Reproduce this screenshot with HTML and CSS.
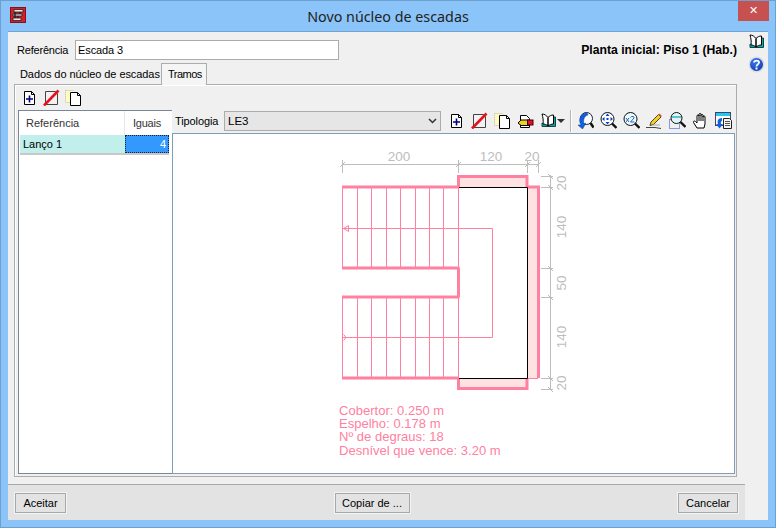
FILE: index.html
```html
<!DOCTYPE html>
<html lang="pt">
<head>
<meta charset="utf-8">
<title>Novo núcleo de escadas</title>
<link rel="stylesheet" href="styles.css">
</head>
<body>
<svg class="defs" width="0" height="0" aria-hidden="true">
  <defs>
    <radialGradient id="g-help" cx=".4" cy=".3" r=".8"><stop offset="0" stop-color="#3c78ee"/><stop offset="1" stop-color="#0f3aa8"/></radialGradient>
    <symbol id="i-new" viewBox="0 0 17 17"><path d="M3.500 2.500h7l3 3v10h-10z" fill="#fff" stroke="#000"/><path d="M10.500 2.500v3h3" fill="none" stroke="#000"/><path d="M8.500 6.500v7M5 10h7" stroke="#000080" stroke-width="1.600" fill="none"/></symbol>
    <symbol id="i-del" viewBox="0 0 17 17"><path d="M2.500 2.500h10l2 2v11h-12z" fill="#f2f2f2" stroke="#444"/><path d="M1 16.500 15.500 1.500" stroke="#e8101c" stroke-width="2.600" fill="none"/></symbol>
    <symbol id="i-copy" viewBox="0 0 17 17"><path d="M.5 1.500h8l2 2v10H.5z" fill="#fffbb8" stroke="#b8b8b8" stroke-dasharray="1 1"/><path d="M5.500 3.500h7l3 3v10h-10z" fill="#fff" stroke="#000"/><path d="M12.500 3.500v3h3" fill="none" stroke="#000"/></symbol>
    <symbol id="i-open" viewBox="0 0 17 17"><path d="M3.500 3.500h6l3 3v2h-9zM3.500 12v3.500h9V12" fill="#fff" stroke="#000"/><path d="M1 11l3-3h8v5.500H4z" fill="#f0d020" stroke="#000"/><rect x="10.500" y="8" width="5.500" height="5" fill="#e01030" stroke="#400"/></symbol>
    <symbol id="i-book" viewBox="0 0 17 17"><path d="M2 11v3.500h13.500V5H14" fill="#18a0a0" stroke="#0b4a4a"/><path d="M2 2c2.500 0 4.500 1.500 6 3.500V14c-1.500-1.500-3.500-2-5-2C3.500 9 3 5 2 2zM8 5.500C9.500 4 11 3 13.500 3v9c-2.500 0-4 1-5.500 2z" fill="#fff" stroke="#000"/></symbol>
    <symbol id="i-lens" viewBox="0 0 17 17"><circle cx="7.500" cy="7" r="6.500" fill="#fff" stroke="#111"/><path d="m12 11.500 4.500 4.500" stroke="#111" stroke-width="2.400"/></symbol>
    <symbol id="i-r" viewBox="0 0 17 17"><circle cx="9.500" cy="6.500" r="6" fill="#fff" stroke="#123"/><path d="m13.500 11 3 4.500" stroke="#111" stroke-width="2.400"/><path d="M4 13C1 8 3 1 10 1l1 2C7 4 6 8 7 12l2-1-3.500 6L1 13z" fill="#1060e0" stroke="#0a3a90" stroke-width=".5"/></symbol>
    <symbol id="i-fit" viewBox="0 0 17 17"><use href="#i-lens"/><path d="M7.500 1.500 5.500 4h4zM7.500 12.500 5.500 10h4zM2 7l2.500-2v4zM13 7l-2.500-2v4z" fill="#0040d0"/><rect x="6.500" y="6" width="2" height="2" fill="#0040d0"/></symbol>
    <symbol id="i-x2" viewBox="0 0 17 17"><circle cx="7.500" cy="7" r="6.500" fill="#e8fbff" stroke="#111"/><path d="m12 11.500 4.500 4.500" stroke="#111" stroke-width="2.400"/><path d="M3 6l3 4M6 6l-3 4" stroke="#3060c0"/><path d="M7.500 5.500q1-1.500 2.500-1t1 1.500L7.500 10h4" fill="none" stroke="#3060c0"/></symbol>
    <symbol id="i-pen" viewBox="0 0 17 17"><path d="m5 10 7.500-7.500 2.500 2.500-7.500 7.500-3.500 1z" fill="#f6d01e" stroke="#222" stroke-width=".8"/><path d="m12.500 2.500 1-1 2.500 2.500-1 1z" fill="#e05050"/><path d="M0 15.500h9l6 1" fill="none" stroke="#444"/><path d="M7 13h7" stroke="#aaa"/></symbol>
    <symbol id="i-zwin" viewBox="0 0 17 17"><rect x=".5" y="7.500" width="10" height="9" fill="none" stroke="#2040d0" stroke-dasharray="1 1"/><circle cx="7.500" cy="6" r="5.500" fill="#dff6f8" stroke="#111"/><path d="m11.500 10 5 5" stroke="#111" stroke-width="2.400"/><path d="M3 5h9" stroke="#30b0c0" stroke-width="1.500"/></symbol>
    <symbol id="i-hand" viewBox="0 0 17 17"><path d="M5 16 1.500 10.500C1 9 2.500 8.500 3.500 9.500L5 11V4c0-1.500 2-1.500 2 0V2.500c0-1.500 2-1.500 2 0v1c0-1.500 2-1.500 2 0V5c0-1.500 2-1.500 2 0v7l-1 4z" fill="#fff" stroke="#000"/><path d="M7 3v6M9 3v6M11 4v5" stroke="#000" fill="none"/></symbol>
    <symbol id="i-win" viewBox="0 0 17 17"><rect x=".5" y=".5" width="15" height="13" fill="#fff" stroke="#446"/><rect x="1" y="1" width="14" height="3" fill="#22c8f0"/><path d="M8.500 6.500h6l2 2v8h-8z" fill="#f4f4f4" stroke="#222"/><path d="M10 9.500h5M10 11.500h5M10 13.500h5" stroke="#555"/><path d="M7 6C3 6 2 9 3 12H1l3.500 4.500L8 12H6c-.5-1.500 0-3 1-3z" fill="#1060e0"/></symbol>
    <symbol id="i-help" viewBox="0 0 17 17"><circle cx="8.500" cy="8.500" r="8" fill="#d8dde8"/><circle cx="8.500" cy="8.500" r="6.500" fill="url(#g-help)"/><path d="M6 6.500c.3-2.500 5-2.500 5 0 0 2-2.500 1.800-2.500 4" fill="none" stroke="#fff" stroke-width="1.800"/><rect x="7.500" y="11.500" width="2" height="2" fill="#fff"/></symbol>
    <symbol id="i-app" viewBox="0 0 16 16"><rect width="16" height="16" fill="#d2202c"/><rect x=".5" y=".5" width="15" height="15" fill="none" stroke="#8a1018"/><path d="M4 2.500h9v2.500H4zM3 7h9v2H3zM3 11h8v2.500H3z" fill="#e8e8e8" stroke="#222" stroke-width=".8"/><path d="M5 5v6M10 5v2M8 9v2" stroke="#222" stroke-width="1.400"/></symbol>
  </defs>
</svg>

<div class="window">
  <header class="titlebar">
    <svg class="app-icon"><use href="#i-app"/></svg>
    <div class="title">Novo núcleo de escadas</div>
    <div class="close">✕</div>
  </header>

  <div class="frame">
    <div class="client">
      <main class="main">
        <div class="ref-row">
          <label class="ref-label">Referência</label>
          <input class="ref-input" type="text" value="Escada 3">
          <div class="floor">Planta inicial: Piso 1 (Hab.)</div>
        </div>

        <div class="tabs">
          <div class="tab">Dados do núcleo de escadas</div>
          <div class="tab tab-active">Tramos</div>
        </div>

        <section class="panel">
          <div class="left-col">
            <div class="mini-tools">
              <svg class="ico"><use href="#i-new"/></svg>
              <svg class="ico"><use href="#i-del"/></svg>
              <svg class="ico"><use href="#i-copy"/></svg>
            </div>
            <div class="list">
              <div class="list-head">
                <div class="col-a">Referência</div>
                <div class="col-b">Iguais</div>
              </div>
              <div class="list-row">
                <div class="cell-a">Lanço 1</div>
                <div class="cell-b">4</div>
              </div>
            </div>
          </div>

          <div class="right-col">
            <div class="type-row">
              <span class="type-label">Tipologia</span>
              <div class="select"><span>LE3</span><svg class="chev" viewBox="0 0 9 6"><path d="M1 1l3.500 3.500L8 1" fill="none" stroke="#333" stroke-width="1.500"/></svg></div>
              <div class="tools">
                <svg class="ico"><use href="#i-new"/></svg>
                <svg class="ico"><use href="#i-del"/></svg>
                <svg class="ico"><use href="#i-copy"/></svg>
                <svg class="ico"><use href="#i-open"/></svg>
                <svg class="ico"><use href="#i-book"/></svg>
                <span class="caret"></span>
                <span class="sep"></span>
                <svg class="ico"><use href="#i-r"/></svg>
                <svg class="ico"><use href="#i-fit"/></svg>
                <svg class="ico"><use href="#i-x2"/></svg>
                <svg class="ico"><use href="#i-pen"/></svg>
                <svg class="ico"><use href="#i-zwin"/></svg>
                <svg class="ico"><use href="#i-hand"/></svg>
                <svg class="ico"><use href="#i-win"/></svg>
              </div>
            </div>

            <div class="canvas">
              <svg class="drawing" viewBox="173 134 562 340" width="562" height="340">
                <!-- parede -->
                <rect class="wall" x="459" y="177" width="68" height="10"/>
                <rect class="wall" x="528" y="188" width="10" height="190"/>
                <rect class="wall" x="459" y="379" width="68" height="10"/>
                <path class="thick" d="M458.500 187V176.500H527V187M527 187H538.500V378M458.500 378V388.500H527V378"/>
                <!-- lanços -->
                <path class="thick" d="M342 187H458M342 268H459.500M458.500 268V297M342 297H459.500M342 378H458"/>
                <path class="thin" d="M342.500 187V268M357.500 187V268M371.500 187V268M386.500 187V268M400.500 187V268M415.500 187V268M429.500 187V268M443.500 187V268M458.500 187V268"/>
                <path class="thin" d="M342.500 297V378M357.500 297V378M371.500 297V378M386.500 297V378M400.500 297V378M415.500 297V378M429.500 297V378M443.500 297V378M458.500 297V378"/>
                <path class="thin" d="M342 228.500H492.500V337.500H342"/>
                <path class="thin" d="M348.500 225.500V231.500L343.500 228.500Z"/>
                <path class="thin" d="M343.500 334.500Q347.500 337.500 343.500 340.500"/>
                <path class="thin" d="M528 378.500H538"/>
                <path class="black" d="M459 187.500H527.500V378.500H459"/>
                <!-- cotas -->
                <path class="dim" d="M342.500 164.500H538.500M342.500 160V173M458.500 160V173M527.500 160V173M538.500 160V173"/>
                <path class="dim" d="M340 167l5-5M456 167l5-5M525 167l5-5M536 167l5-5"/>
                <path class="dim" d="M550.500 175V389M541 176.500H553M541 187.500H553M541 268.500H553M541 297.500H553M541 378.500H553M541 389.500H553"/>
                <path class="dim" d="M548 174l5 5M548 185l5 5M548 266l5 5M548 295l5 5M548 376l5 5M548 387l5 5"/>
                <text class="dim-text" x="399" y="161" text-anchor="middle">200</text>
                <text class="dim-text" x="491" y="161" text-anchor="middle">120</text>
                <text class="dim-text" x="532" y="161" text-anchor="middle">20</text>
                <text class="dim-text" transform="translate(566 183) rotate(-90)" text-anchor="middle">20</text>
                <text class="dim-text" transform="translate(566 227) rotate(-90)" text-anchor="middle">140</text>
                <text class="dim-text" transform="translate(566 283) rotate(-90)" text-anchor="middle">50</text>
                <text class="dim-text" transform="translate(566 337) rotate(-90)" text-anchor="middle">140</text>
                <text class="dim-text" transform="translate(566 383) rotate(-90)" text-anchor="middle">20</text>
                <!-- legenda -->
                <text class="note"><tspan x="339" y="414.500">Cobertor: 0.250 m</tspan><tspan x="339" y="428">Espelho: 0.178 m</tspan><tspan x="339" y="441">Nº de degraus: 18</tspan><tspan x="339" y="454.500">Desnível que vence: 3.20 m</tspan></text>
              </svg>
            </div>
          </div>
        </section>

        <footer class="actions">
          <button class="btn btn-ok">Aceitar</button>
          <button class="btn btn-copy">Copiar de ...</button>
          <button class="btn btn-cancel">Cancelar</button>
        </footer>
      </main>

      <aside class="side">
        <svg class="ico"><use href="#i-book"/></svg>
        <svg class="ico"><use href="#i-help"/></svg>
      </aside>
    </div>
  </div>
</div>
</body>
</html>
```

FILE: styles.css
```css
* { box-sizing: border-box; }
html, body { margin: 0; padding: 0; }
body { width: 776px; height: 528px; overflow: hidden; font: 11px "Liberation Sans", Arial, sans-serif; color: #000; }
.defs { display: block; position: absolute; }

.window { width: 776px; height: 528px; display: flex; flex-direction: column; background: #8ac4f9; border: 1px solid #6d9fcf; }

.titlebar { height: 30px; flex: none; display: flex; position: relative; align-items: center; justify-content: center; }
.app-icon { position: absolute; left: 9px; top: 6px; width: 16px; height: 16px; }
.title { font: 14.300px "Noto Sans", sans-serif; color: #222; }
.close { position: absolute; right: 6px; top: 0; width: 31px; height: 20px; background: #c75050; color: #fff; font: bold 11px/20px "DejaVu Sans", sans-serif; text-align: center; }

.frame { flex: 1; min-height: 0; padding: 0 7px 7px; }
.client { height: 100%; display: flex; background: #f0f0f0; border-top: 1px solid #6fa3d2; }

.main { width: 737px; flex: none; display: flex; flex-direction: column; }
.side { flex: 1; display: flex; flex-direction: column; align-items: center; gap: 6px; padding-top: 1px; }

.ref-row { display: flex; align-items: center; height: 20px; margin-top: 8px; padding: 0 8px 0 9px; }
.ref-label { width: 58px; flex: none; letter-spacing: -.2px; }
.ref-input { width: 264px; height: 20px; border: 1px solid #ababab; background: #fff; padding: 0 2px; font: 11px "Liberation Sans", sans-serif; letter-spacing: -.1px; outline: none; }
.floor { margin-left: auto; font-weight: bold; font-size: 12.200px; }

.tabs { display: flex; height: 21px; margin-top: 3px; padding-left: 8px; align-items: flex-end; position: relative; z-index: 1; }
.tab { height: 20px; width: 145px; padding: 4px 0 0 4px; white-space: nowrap; letter-spacing: -.08px; }
.tab-active { height: 22px; width: 46px; padding: 4px 0 0 6px; background: #f5f5f5; border: 1px solid #acacac; border-bottom: none; margin-bottom: -1px; letter-spacing: -.5px; }

.panel { height: 393px; width: 723px; margin-left: 6px; flex: none; display: flex; border: 1px solid #acacac; background: #f0f0f0; padding: 0 1px 2px 3px; box-shadow: inset 1px 1px 0 #fff; }

.left-col { width: 154px; flex: none; display: flex; flex-direction: column; }
.mini-tools { height: 25px; display: flex; align-items: center; gap: 5px; padding-left: 3px; flex: none; }
.list { flex: 1; border: 1px solid #7a8696; border-right: none; background: #fff; padding-left: 1px; }
.list-head { display: flex; height: 24px; background: #fff; line-height: 25px; }
.col-a { width: 105px; padding-left: 6px; border-right: 1px solid #e8e8e8; color: #333; }
.col-b { width: 43px; text-align: center; color: #333; letter-spacing: -.2px; padding-left: 1px; }
.list-row { display: flex; height: 20px; width: 149px; background: #c0efec; line-height: 19px; border-bottom: 2px solid #c8c8c8; }
.cell-a { width: 105px; padding-left: 3px; }
.cell-b { width: 44px; background: #3399ff; color: #fff; text-align: right; padding-right: 3px; outline: 1px dotted #123; outline-offset: -1px; }

.right-col { flex: 1; display: flex; flex-direction: column; min-width: 0; }
.type-row { height: 48px; display: flex; align-items: center; padding: 23px 0 0 3px; flex: none; }
.type-label { width: 49px; flex: none; letter-spacing: -.1px; }
.select { width: 217px; height: 20px; flex: none; display: flex; align-items: center; justify-content: space-between; padding: 0 3px; background: #e6e6e6; border: 1px solid #acacac; font-size: 11.500px; }
.chev { width: 9px; height: 6px; }
.tools { display: flex; align-items: center; margin-left: 7px; }
.tools .ico { margin-right: 6px; }
.caret { width: 0; height: 0; border: 4px solid transparent; border-top: 4px solid #333; border-bottom: none; margin-left: -6px; }
.sep { width: 2px; height: 22px; margin: 0 5px 0 5px; background: #b4b4b4; border-right: 1px solid #fff; }
.ico { width: 17px; height: 17px; flex: none; display: block; overflow: visible; }

.canvas { flex: 1; border: 1px solid #7f9db9; background: #fff; overflow: hidden; }
.drawing { display: block; }

.wall { fill: #ffe2e2; }
.thick { fill: none; stroke: #ff80a0; stroke-width: 3; }
.thin { fill: none; stroke: #ff80a0; stroke-width: 1; }
.black { fill: none; stroke: #000; stroke-width: 1; }
.dim { fill: none; stroke: #bdbdbd; stroke-width: 1; }
.dim-text { font: 13.500px "Liberation Sans", sans-serif; fill: #bdbdbd; }
.note { font: 13px "Liberation Sans", sans-serif; letter-spacing: .02px; fill: #ff80a0; }

.actions { flex: 1; margin-top: 7px; display: flex; align-items: center; justify-content: space-between; background: #e3e3e3; border-top: 1px solid #a8a8a8; padding: 0 7px; }
.btn { height: 20px; padding: 0; background: #e3e3e3; border: 1px solid #a8a8a8; box-shadow: 0 0 0 1px #f4f4f4; font: 11px "Liberation Sans", sans-serif; color: #000; }
.btn-ok { width: 51px; }
.btn-copy { width: 75px; }
.btn-cancel { width: 60px; }
```
